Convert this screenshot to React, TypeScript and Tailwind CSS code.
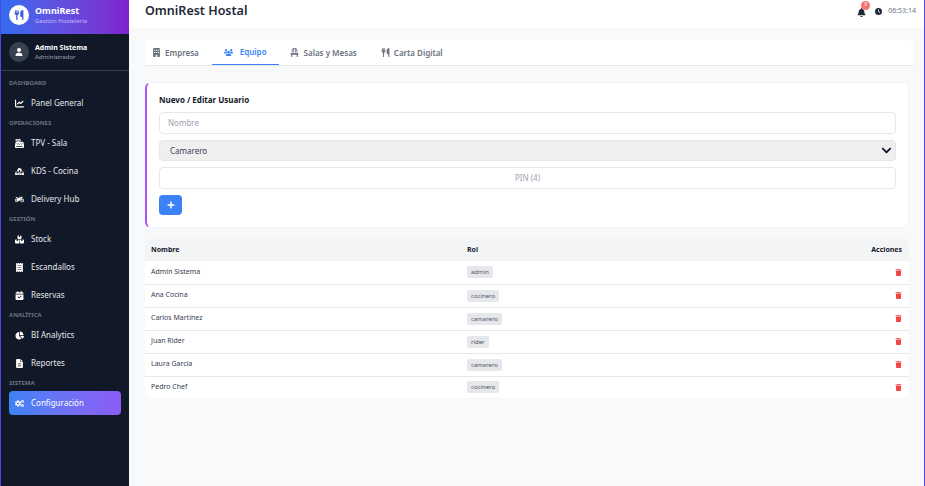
import type { ReactNode } from 'react';
import { FaChevronDown, FaCogs, FaMotorcycle, FaPlus, FaTrash } from 'react-icons/fa';
import {
  FaBell, FaBoxesStacked, FaBuilding, FaCalendarCheck, FaCashRegister, FaChair, FaChartLine, FaChartPie,
  FaClock, FaFileLines, FaFireBurner, FaReceipt, FaUser, FaUsers, FaUtensils,
} from 'react-icons/fa6';

const nav: { label: string; items: { name: string; icon: ReactNode; active?: boolean }[] }[] = [
  { label: 'DASHBOARD', items: [{ name: 'Panel General', icon: <FaChartLine /> }] },
  {
    label: 'OPERACIONES',
    items: [
      { name: 'TPV - Sala', icon: <FaCashRegister /> },
      { name: 'KDS - Cocina', icon: <FaFireBurner /> },
      { name: 'Delivery Hub', icon: <FaMotorcycle /> },
    ],
  },
  {
    label: 'GESTIÓN',
    items: [
      { name: 'Stock', icon: <FaBoxesStacked /> },
      { name: 'Escandallos', icon: <FaReceipt /> },
      { name: 'Reservas', icon: <FaCalendarCheck /> },
    ],
  },
  {
    label: 'ANALÍTICA',
    items: [
      { name: 'BI Analytics', icon: <FaChartPie /> },
      { name: 'Reportes', icon: <FaFileLines /> },
    ],
  },
  { label: 'SISTEMA', items: [{ name: 'Configuración', icon: <FaCogs />, active: true }] },
];

const tabs = [
  { name: 'Empresa', icon: <FaBuilding />, cls: 'pl-[6px] pr-[13px]', box: 'w-[13px]' },
  { name: 'Equipo', icon: <FaUsers />, cls: 'px-[12px]', box: 'w-[16px]', active: true },
  { name: 'Salas y Mesas', icon: <FaChair />, cls: 'pl-[11px] pr-[12px]', box: 'w-[14px]' },
  { name: 'Carta Digital', icon: <FaUtensils />, cls: 'px-[12px]', box: 'w-[13px]' },
];

const users = [
  ['Admin Sistema', 'admin'],
  ['Ana Cocina', 'cocinero'],
  ['Carlos Martínez', 'camarero'],
  ['Juan Rider', 'rider'],
  ['Laura García', 'camarero'],
  ['Pedro Chef', 'cocinero'],
];

function Sidebar() {
  return (
    <aside className="w-[128px] shrink-0 bg-[#111827] text-white">
      <div className="h-[34px] flex items-center gap-[6px] pl-[8px] pb-[4px] bg-gradient-to-r from-[#2f6bf0] to-[#7e22ce]">
        <div className="w-[20px] h-[20px] rounded-full bg-white flex items-center justify-center text-[#3b5bdb] text-[10px]">
          <FaUtensils />
        </div>
        <div className="leading-none">
          <div className="text-[9px] font-bold leading-[12px]">OmniRest</div>
          <div className="text-[6px] leading-[9px] text-[#c4b5fd]">Gestión Hostelería</div>
        </div>
      </div>
      <div className="h-[37px] flex items-center gap-[6px] pl-[8px] border-b border-[#374151]">
        <div className="w-[20px] h-[20px] rounded-full bg-[#374151] flex items-center justify-center text-[8px]">
          <FaUser />
        </div>
        <div>
          <div className="text-[7px] font-bold leading-[10px]">Admin Sistema</div>
          <div className="text-[6px] leading-[8px] text-[#9ca3af]">Administrador</div>
        </div>
      </div>
      <nav className="px-[8px] pt-[8px]">
        {nav.map((group) => (
          <div key={group.label}>
            <div className="h-[12px] text-[6px] leading-[8px] font-bold text-[#6b7280]">{group.label}</div>
            {group.items.map((item) => (
              <div
                key={item.name}
                className={`h-[24px] mb-[4px] rounded-[4px] pl-[6px] flex items-center text-[8px] ${
                  item.active ? 'bg-gradient-to-r from-[#3b82f6] to-[#8b5cf6]' : 'text-[#e5e7eb]'
                }`}
              >
                <span className="w-[16px] text-[9px] text-white flex">{item.icon}</span>
                {item.name}
              </div>
            ))}
          </div>
        ))}
      </nav>
    </aside>
  );
}

function Header() {
  return (
    <header className="h-[28px] shrink-0 bg-white flex items-center justify-between pl-[16px] pr-[8px] pb-[6px]">
      <h1 className="text-[12.5px] font-semibold text-[#1f2937]">OmniRest Hostal</h1>
      <div className="flex items-center">
        <div className="relative text-[#1f2937] text-[9px] mt-[2px] mr-[9px]">
          <FaBell />
          <span className="absolute -top-[7px] -right-[4px] w-[9px] h-[9px] rounded-full bg-[#f87171] text-white text-[5px] flex items-center justify-center">
            9
          </span>
        </div>
        <FaClock className="text-[#1f2937] text-[7px] mr-[6px]" />
        <span className="text-[7px] text-[#6b7280]">06:53:14</span>
      </div>
    </header>
  );
}

function Tabs() {
  return (
    <div className="w-[768px] h-[26px] bg-white rounded-t-[4px] border-b border-[#e5e7eb] flex pl-[1px] text-[8px] font-semibold text-[#6b7280]">
      {tabs.map((tab) => (
        <div
          key={tab.name}
          className={`h-[25px] flex items-center ${tab.cls} ${
            tab.active ? 'text-[#3b82f6] border-b border-[#3b82f6]' : ''
          }`}
        >
          <span className={`${tab.box} text-[9px]`}>{tab.icon}</span>
          {tab.name}
        </div>
      ))}
    </div>
  );
}

function UserForm() {
  return (
    <div className="h-[146px] w-[764px] mt-[16px] bg-white rounded-[6px] border border-[#f3f4f6] border-l-2 border-l-[#a855f7] pt-[11px] pl-[12px] pr-[12px]">
      <div className="text-[8px] font-bold text-[#111827] leading-[12px]">Nuevo / Editar Usuario</div>
      <div className="mt-[6px] flex flex-col gap-[6px]">
        <div className="h-[22px] rounded-[4px] border border-[#e5e7eb] pl-[8px] flex items-center text-[8px] text-[#9ca3af]">Nombre</div>
        <div className="h-[21px] rounded-[4px] border border-[#e5e7eb] bg-[#efefef] pl-[10px] pr-[3px] flex items-center justify-between text-[8px] text-[#374151]">
          Camarero
          <FaChevronDown className="text-[11px] text-[#111827]" />
        </div>
        <div className="h-[22px] rounded-[4px] border border-[#e5e7eb] flex items-center justify-center text-[8px] text-[#9ca3af]">PIN (4)</div>
      </div>
      <button className="mt-[6px] w-[23px] h-[20px] rounded-[4px] bg-[#3b82f6] text-white text-[8px] flex items-center justify-center">
        <FaPlus />
      </button>
    </div>
  );
}

function UserTable() {
  return (
    <div className="w-[764px] mt-[11px] bg-white rounded-[6px] overflow-hidden">
      <table className="w-full table-fixed text-[7px]">
        <thead className="bg-[#f3f4f6] text-[#111827]">
          <tr className="h-[22px] text-left">
            <th className="pl-[6px] w-[322px] font-bold">Nombre</th>
            <th className="font-bold">Rol</th>
            <th className="pr-[7px] font-bold text-right">Acciones</th>
          </tr>
        </thead>
        <tbody>
          {users.map(([name, role]) => (
            <tr key={name} className="h-[23px] border-b border-[#e5e7eb] last:border-b-0 last:h-[22px]">
              <td className="pl-[6px] text-[#374151]">{name}</td>
              <td>
                <span className="inline-block align-middle px-[4px] rounded-[2px] bg-[#e5e7eb] text-[6px] leading-[12px] text-[#4b5563]">{role}</span>
              </td>
              <td className="pr-[7px]">
                <div className="flex justify-end text-[#ef4444] text-[7px]">
                  <FaTrash />
                </div>
              </td>
            </tr>
          ))}
        </tbody>
      </table>
    </div>
  );
}

export default function App() {
  return (
    <div className="h-screen overflow-hidden flex px-px bg-[#4f46e5] font-['Noto_Sans',sans-serif]">
      <Sidebar />
      <main className="flex-1 min-w-0 flex flex-col bg-[#f8f9fb]">
        <Header />
        <div className="pl-[16px] pt-[12px]">
          <Tabs />
          <UserForm />
          <UserTable />
        </div>
      </main>
    </div>
  );
}
